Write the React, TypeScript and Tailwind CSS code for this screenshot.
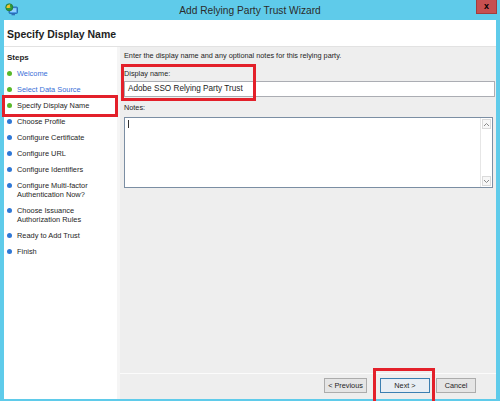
import React from "react";

const steps: { label: string[]; done: boolean; link: boolean }[] = [
  { label: ["Welcome"], done: true, link: true },
  { label: ["Select Data Source"], done: true, link: true },
  { label: ["Specify Display Name"], done: true, link: false },
  { label: ["Choose Profile"], done: false, link: false },
  { label: ["Configure Certificate"], done: false, link: false },
  { label: ["Configure URL"], done: false, link: false },
  { label: ["Configure Identifiers"], done: false, link: false },
  { label: ["Configure Multi-factor", "Authentication Now?"], done: false, link: false },
  { label: ["Choose Issuance", "Authorization Rules"], done: false, link: false },
  { label: ["Ready to Add Trust"], done: false, link: false },
  { label: ["Finish"], done: false, link: false },
];

const WizardIcon = () => (
  <svg width="13" height="13" viewBox="0 0 13 13">
    <rect x="4" y="4" width="8.5" height="6.5" rx="1" fill="#3a8ee0" stroke="#1f5fa8" strokeWidth="0.8" />
    <rect x="5.3" y="5.2" width="6" height="4" fill="#8fd0ff" />
    <rect x="6.5" y="10.5" width="3.5" height="1.8" fill="#2f6fb8" />
    <circle cx="4.3" cy="4.3" r="3.6" fill="#2b9a3c" />
    <path d="M1.5 3.2 Q3 1 5.5 1.2 Q4 3 5.6 4.4 Q3.4 5.4 1.4 5 Z" fill="#f2c230" />
    <circle cx="4.3" cy="4.3" r="3.6" fill="none" stroke="#1f6b2a" strokeWidth="0.6" />
  </svg>
);

const Chevron = ({ up }: { up?: boolean }) => (
  <svg width="7" height="5" viewBox="0 0 7 5">
    <path d={up ? "M1 4 L3.5 1.5 L6 4" : "M1 1 L3.5 3.5 L6 1"} fill="none" stroke="#8a8a8a" strokeWidth="1" />
  </svg>
);

export default function App() {
  return (
    <div
      className="relative w-[500px] h-[401px] bg-[#5fcbea] flex flex-col overflow-hidden text-[#1e1e1e]"
      style={{ fontFamily: '"Liberation Sans", Arial, sans-serif' }}
    >
      {/* title bar */}
      <div className="h-[20px] grid grid-cols-[1fr_auto_1fr] items-start">
        <div className="pl-[5px] pt-[3px]">
          <WizardIcon />
        </div>
        <div className="text-[10.2px] leading-[21px] text-[#2b2b2b]">Add Relying Party Trust Wizard</div>
        <div className="flex justify-end pr-[3px]">
          <div className="w-[21px] h-[14px] bg-[#c75050] border border-[#a33c3c] border-t-0 flex items-center justify-center text-[9px] font-bold leading-none text-black">
            x
          </div>
        </div>
      </div>

      {/* window body */}
      <div className="flex-1 flex flex-col pl-[4px] pr-[4px] pb-[2px]">
        <div className="h-[27px] bg-white border-b border-[#e2e2e2] flex items-center pl-[3px] pt-[4px]">
          <span className="text-[10.5px] font-bold">Specify Display Name</span>
        </div>

        <div className="flex-1 flex">
          {/* steps */}
          <div className="w-[113px] bg-white pt-[6px]">
            <div className="pl-[3px] text-[8px] font-bold leading-[10px] mb-[6px]">Steps</div>
            <div className="flex flex-col gap-[7px]">
              {steps.map((s, i) => (
                <div key={i} className="flex items-start">
                  <span
                    className={
                      "mt-[2px] ml-[3px] w-[5px] h-[5px] rounded-full shrink-0 " +
                      (s.done ? "bg-[#58b82a]" : "bg-[#2f78d6]")
                    }
                  />
                  <div
                    className={
                      "ml-[5px] text-[7.4px] leading-[9px] " + (s.link ? "text-[#3b6fd8]" : "text-[#1e1e1e]")
                    }
                  >
                    {s.label.map((l, j) => (
                      <div key={j}>{l}</div>
                    ))}
                  </div>
                </div>
              ))}
            </div>
          </div>
          <div className="w-[3px] bg-[#f5f5f5]" />

          {/* content */}
          <div className="flex-1 bg-[#eeeeee] flex flex-col">
            <div className="flex-1 flex flex-col pl-[4px] pr-[1px] pt-[4px]">
              <div className="text-[7.3px] leading-[10px]">
                Enter the display name and any optional notes for this relying party.
              </div>
              <div className="mt-[8px] text-[7.3px] leading-[10px]">Display name:</div>
              <div className="mt-[2px] h-[16px] bg-white border border-[#abadb3] flex items-center pl-[3px] text-[8.2px]">
                Adobe SSO Relying Party Trust
              </div>
              <div className="mt-[6px] text-[7.3px] leading-[10px]">Notes:</div>
              <div className="mt-[4px] mr-[2px] h-[71px] bg-white border border-[#7b8ea3] flex">
                <div className="flex-1 pl-[3px] pt-[2px]">
                  <div className="w-[1px] h-[8px] bg-[#333]" />
                </div>
                <div className="w-[12px] border-l border-[#e6e6e6] flex flex-col justify-between p-[1px]">
                  <div className="h-[10px] border border-[#dadada] bg-[#f7f7f7] flex items-center justify-center">
                    <Chevron up />
                  </div>
                  <div className="h-[10px] border border-[#dadada] bg-[#f7f7f7] flex items-center justify-center">
                    <Chevron />
                  </div>
                </div>
              </div>
            </div>

            <div className="h-[26px] border-t border-[#fbfbfb] flex items-start pt-[4px] pr-[20px] justify-end">
              <button className="w-[43px] h-[15px] border border-[#acacac] bg-[#e5e5e5] text-[7.3px] leading-none">
                &lt; Previous
              </button>
              <button className="ml-[13px] w-[50px] h-[15px] border border-[#3c7fb1] bg-[#e8eef4] text-[7.3px] leading-none">
                Next &gt;
              </button>
              <button className="ml-[6px] w-[40px] h-[15px] border border-[#acacac] bg-[#e5e5e5] text-[7.3px] leading-none">
                Cancel
              </button>
            </div>
          </div>
        </div>
      </div>

      {/* annotation boxes */}
      <div className="absolute left-[2px] top-[95px] w-[116px] h-[22px] border-[3px] border-[#e3202a]" />
      <div className="absolute left-[121px] top-[64px] w-[135px] h-[37px] border-[3px] border-[#e3202a]" />
      <div className="absolute left-[373px] top-[368px] w-[62px] h-[36px] border-[3px] border-[#e3202a]" />
    </div>
  );
}
